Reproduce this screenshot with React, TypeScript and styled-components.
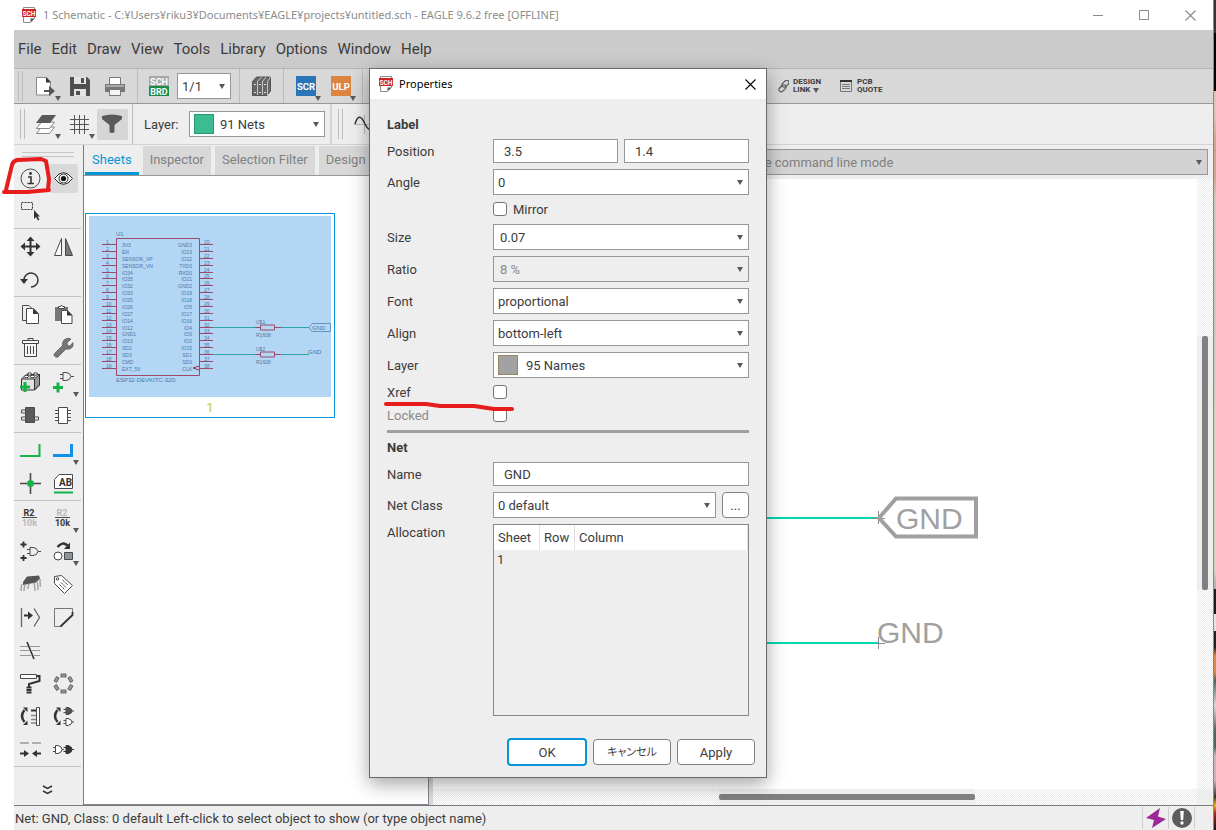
import React from "react";
import styled, { createGlobalStyle, css } from "styled-components";

const ui = `Roboto, "Noto Sans CJK JP", sans-serif`;
const caption = `"Noto Sans", "Noto Sans CJK JP", sans-serif`;

const GlobalStyle = createGlobalStyle`
  *, *::before, *::after { box-sizing: border-box; }
  body { margin: 0; background: #fff; font: 13px/17px ${ui}; color: #3c3c3c; }
  button, input, select { font: inherit; color: inherit; }
`;

/* ---------- window frame ---------- */

const Desktop = styled.div`
  display: flex;
  min-height: 100vh;
  position: relative;
`;

const AppWindow = styled.div`
  flex: 1;
  min-width: 0;
  display: flex;
  flex-direction: column;
  border-right: 1px solid #8a8a8a;
`;

const Wallpaper = styled.div`
  flex: 0 0 2px;
  background: linear-gradient(
    #30343c 0 4%, #000 4% 11%, #dcc5b2 11% 14%, #d0a488 17% 21%, #cfc8be 24% 40%,
    #d8d0c2 50% 69%, #b9b4ac 70% 71%, #1f1b20 71% 74%, #e8e2dc 74% 76%, #241f22 76% 78%,
    #d9874a 79% 81%, #46695a 82%, #dadada 85%, #8a8a8a 87%, #46695a 88% 90%,
    #c8b7b2 91% 94%, #3b3230 96%, #e3bd18 97%, #a3261a 98%, #1a1412 100%
  );
`;

const TitleBar = styled.header`
  display: flex;
  align-items: center;
  height: 30px;
  padding-left: 22px;
  font: 11px/16px ${caption};
  color: #8c8c8c;
`;

const TitleText = styled.span`
  flex: 1;
  margin-left: 7px;
`;

const CaptionButton = styled.button`
  width: 46px;
  height: 30px;
  padding: 0;
  border: 0;
  background: none;
  display: grid;
  place-items: center;
  color: ${(p: { $dark?: boolean }) => (p.$dark ? "#000" : "#8a8a8a")};
`;

const Client = styled.div`
  flex: 1;
  display: flex;
  flex-direction: column;
  margin-left: 14px;
`;

const MenuBar = styled.nav`
  display: flex;
  gap: 10px;
  height: 39px;
  padding-left: 4px;
  align-items: center;
  background: #cbcbcb;
  border-bottom: 1px solid #b4b4b4;
  font-size: 15px;
`;

const MenuItem = styled.button`
  padding: 0;
  border: 0;
  background: none;
`;

const ToolBar = styled.div<{ $light?: boolean }>`
  display: flex;
  align-items: center;
  height: ${(p) => (p.$light ? 41 : 35)}px;
  background: ${(p) => (p.$light ? "#eee" : "#d8d8d8")};
  border-bottom: 1px solid ${(p) => (p.$light ? "#d3d3d3" : "#979797")};
`;

const Grip = styled.span<{ $wide?: boolean }>`
  width: 5px;
  height: 30px;
  margin: ${(p) => (p.$wide ? "0 4px 0 6px" : "0 5px 0 4px")};
  border: solid #bdbdbd;
  border-width: 0 1px;
`;

const Divider = styled.span<{ $strong?: boolean }>`
  align-self: stretch;
  width: ${(p) => (p.$strong ? 2 : 1)}px;
  margin: 0 4px;
  background: #bcbcbc;
  ${(p) => p.$strong && css`background: #d5d5d5; margin: 0 0 0 5px;`}
`;

const dropMark = css`
  &::after {
    content: "";
    position: absolute;
    right: 2px;
    bottom: 1px;
    border: solid transparent;
    border-width: 5px 3px 0;
    border-top-color: #595959;
  }
`;

const ToolButton = styled.button<{ $w?: number; $on?: boolean; $drop?: boolean }>`
  position: relative;
  display: grid;
  place-items: center;
  width: ${(p) => p.$w ?? 35}px;
  height: 31px;
  padding: 0;
  border: 0;
  border-radius: 2px;
  background: ${(p) => (p.$on ? "#d6d6d6" : "none")};
  ${(p) => p.$drop && dropMark}
`;

const SheetPicker = styled.div`
  display: flex;
  margin-right: 4px;
`;

const LayerLabel = styled.label`
  width: 52px;
  padding-left: 7px;
`;

const LinkTools = styled.div`
  display: flex;
  gap: 18px;
  margin-left: 411px;
`;

const LinkTool = styled.button<{ $drop?: boolean }>`
  position: relative;
  display: flex;
  align-items: center;
  gap: 4px;
  padding: 0;
  border: 0;
  background: none;
  text-align: left;
  font: bold 8px/8px ${ui};
  ${(p) => p.$drop && dropMark}
`;

/* ---------- form fields ---------- */

const SelectBox = styled.span<{ $w?: number }>`
  position: relative;
  display: flex;
  align-items: center;
  height: 26px;
  ${(p) => (p.$w ? css`flex: 0 0 ${p.$w}px;` : css`flex: 1;`)}
  &::after {
    content: "";
    position: absolute;
    right: 6px;
    top: 11px;
    border: solid transparent;
    border-width: 5px 3px 0;
    border-top-color: #595959;
  }
`;

const Select = styled.select<{ $pad?: number }>`
  appearance: none;
  width: 100%;
  height: 26px;
  padding: 0 16px 0 ${(p) => p.$pad ?? 4}px;
  border: 1px solid #979797;
  border-radius: 0;
  background: #fff;
  &:disabled {
    background: #eee;
    color: #8a8a8a;
    opacity: 1;
  }
`;

const Swatch = styled.i<{ $net?: boolean }>`
  position: absolute;
  left: 5px;
  top: 3px;
  width: 20px;
  height: 20px;
  background: ${(p) => (p.$net ? "#3dbb92" : "#a2a2a2")};
  border: 1px solid ${(p) => (p.$net ? "#259a72" : "#998464")};
`;

const TextBox = styled.input`
  flex: 1;
  width: 0;
  height: 24px;
  padding: 0 10px;
  border: 1px solid #979797;
  background: #fff;
`;

const CheckBox = styled.input`
  appearance: none;
  width: 14px;
  height: 14px;
  margin: 1px 0 2px;
  border: 1px solid #757575;
  border-radius: 3px;
  background: #fff;
`;

/* ---------- work area ---------- */

const WorkArea = styled.main`
  flex: 1;
  display: flex;
  background: #eee;
`;

const SideBar = styled.aside`
  width: 70px;
  flex: none;
  border-right: 1px solid #7b7b7b;
  padding-right: 2px;
  padding-top: 7px;
`;

const SideGrip = styled.div`
  height: 5px;
  margin: 0 7px 5px 8px;
  border: solid #c6c6c6;
  border-width: 1px 0;
`;

const ToolGroup = styled.div`
  display: grid;
  grid-template-columns: 33px 33px;
  grid-auto-rows: 33px;
  & + & {
    border-top: 1px solid #c2c2c2;
    padding-top: 1px;
  }
`;

const SideTool = styled.button<{ $on?: boolean; $drop?: boolean }>`
  position: relative;
  display: grid;
  place-items: center;
  margin: 2px;
  padding: 0;
  border: 0;
  border-radius: 2px;
  background: ${(p) => (p.$on ? "#d9d9d9" : "none")};
  ${(p) =>
    p.$drop &&
    css`
      ${dropMark}
      &::after {
        right: -1px;
        bottom: 0;
      }
    `}
`;

const MoreTools = styled.button`
  display: grid;
  place-items: center;
  width: 67px;
  height: 39px;
  padding: 8px 0 0;
  border: 0;
  border-top: 1px solid #c2c2c2;
  background: none;
`;

const SheetPane = styled.section`
  width: 345px;
  flex: none;
  display: flex;
  flex-direction: column;
  border-right: 1px solid #7f8690;
  border-bottom: 1px solid #7f8690;
`;

const Tabs = styled.div`
  display: flex;
  gap: 4px;
  height: 31px;
  padding-top: 1px;
  padding-left: 1px;
  overflow: hidden;
  border-bottom: 1px solid #979797;
`;

const Tab = styled.button<{ $on?: boolean }>`
  flex: none;
  padding: 0 7px 2px;
  border: 0;
  background: ${(p) => (p.$on ? "#eee" : "#d8d8d8")};
  color: ${(p) => (p.$on ? "#0696d7" : "#808080")};
  box-shadow: ${(p) => (p.$on ? "inset 0 -3px #0696d7" : "none")};
`;

const SheetList = styled.div`
  flex: 1;
  padding: 37px 1px;
  background: #fff;
`;

const SheetCard = styled.figure`
  width: 250px;
  height: 205px;
  margin: 0;
  padding: 2px 3px;
  border: 1px solid #0696d7;
`;

const Preview = styled.svg`
  display: block;
`;

const SheetCaption = styled.figcaption`
  margin-top: 2px;
  text-align: center;
  color: #c9cc1c;
`;

const Splitter = styled.div`
  width: 4px;
  background: #d9d9d9;
`;

const Editor = styled.section`
  flex: 1;
  min-width: 0;
  display: grid;
  grid-template: 34px 1fr 16px / 1fr 16px;
`;

const CommandBar = styled.div`
  grid-column: 1 / 3;
  display: flex;
  align-items: center;
  padding: 0 5px 0 130px;
`;

const CommandSelect = styled(Select)`
  background: #d3d3d3;
  color: #808080;
`;

const Canvas = styled.svg`
  width: 100%;
  height: 100%;
  background: #fff;
`;

const hatch = "repeating-conic-gradient(#ebebeb 0 25%, #fff 0 50%) 0 0 / 2px 2px";

const ScrollTrack = styled.div<{ $across?: boolean }>`
  display: grid;
  background: ${hatch};
  ${(p) =>
    p.$across
      ? css`grid-template-columns: 286fr 256fr 222fr;`
      : css`grid-template-rows: 157fr 254fr 199fr;`}
`;

const ScrollThumb = styled.div<{ $across?: boolean }>`
  ${(p) => (p.$across ? css`grid-column: 2; padding: 5px 0;` : css`grid-row: 2; padding: 0 5px;`)}
  background: #eee;
  display: grid;
  &::before {
    content: "";
    border-radius: 2px;
    background: #808080;
  }
`;

const StatusBar = styled.footer`
  display: flex;
  align-items: center;
  height: 25px;
  padding-left: 1px;
  padding-right: 18px;
  background: #eee;
  border-top: 1px solid #7b7b7b;
`;

const StatusText = styled.span`
  flex: 1;
`;

const StatusCell = styled.span`
  display: grid;
  place-items: center;
  width: 26px;
  height: 22px;
  border-left: 1px solid #cfcfcf;
  &:last-child {
    width: 27px;
    border-right: 1px solid #cfcfcf;
  }
`;

/* ---------- dialog ---------- */

const Dialog = styled.form`
  position: absolute;
  left: 369px;
  top: 68px;
  width: 398px;
  border: 1px solid #696969;
  background: #eee;
  box-shadow: 0 6px 18px rgba(0, 0, 0, 0.36);
`;

const DialogTitle = styled.header`
  display: flex;
  align-items: center;
  height: 30px;
  padding-left: 9px;
  background: #fff;
  color: #000;
  font: 11px/16px ${caption};
`;

const DialogTitleText = styled(TitleText)`
  margin-left: 6px;
`;

const CloseButton = styled(CaptionButton)`
  width: 32px;
`;

const Fields = styled.div`
  display: grid;
  grid-template-columns: 106px 1fr;
  row-gap: 6px;
  align-items: center;
  padding: 17px 17px 0;
`;

const GroupTitle = styled.h2`
  grid-column: 1 / 3;
  margin: 0;
  font: bold 13px/17px ${ui};
`;

const FieldLabel = styled.label<{ $off?: boolean; $top?: boolean }>`
  color: ${(p) => (p.$off ? "#8a8a8a" : "inherit")};
  align-self: ${(p) => (p.$top ? "start" : "center")};
`;

const FieldRow = styled.div`
  grid-column: 2;
  display: flex;
  align-items: center;
  gap: 6px;
  min-height: 17px;
`;

const Rule = styled.hr`
  grid-column: 1 / 3;
  width: 100%;
  height: 3px;
  margin: 0;
  border: 0;
  background: #a0a0a0;
`;

const DialogButton = styled.button<{ $primary?: boolean; $small?: boolean }>`
  width: ${(p) => (p.$small ? 27 : p.$primary ? 80 : 78)}px;
  height: ${(p) => (p.$primary ? 28 : 26)}px;
  padding: 0;
  border: ${(p) => (p.$primary ? "2px solid #0696d7" : "1px solid #808080")};
  border-radius: 4px;
  background: #fff;
`;

const KanaLabel = styled.span`
  font-size: 11px;
  font-feature-settings: "palt";
`;

const AllocationBox = styled.div`
  height: 192px;
  border: 1px solid #828790;
`;

const AllocationTable = styled.table`
  width: 100%;
  border-collapse: separate;
  border-spacing: 0;
  table-layout: fixed;
  text-align: left;
  th {
    height: 25px;
    padding: 0 4px;
    background: #fff;
    font-weight: normal;
    border-right: 1px solid #e2e2e2;
  }
  td {
    height: 19px;
    padding: 0 3px;
  }
`;

const SheetCol = styled.col`
  width: 46px;
`;
const RowCol = styled.col`
  width: 35px;
`;

const Actions = styled.div`
  display: flex;
  justify-content: flex-end;
  align-items: center;
  gap: 6px;
  padding: 22px 11px 11px;
`;

const Markup = styled.svg`
  position: absolute;
  left: 0;
  top: 0;
  width: 520px;
  height: 420px;
  pointer-events: none;
`;

/* ---------- icons ---------- */

const Icon = ({ children, w = 21, h = 21 }: { children: React.ReactNode; w?: number; h?: number }) => (
  <svg width={w} height={h} viewBox={`0 0 ${w} ${h}`} fill="none" stroke="#4a4a4a" aria-hidden="true">
    {children}
  </svg>
);

const SchIcon = () => (
  <Icon w={14} h={16}>
    <path d="M1.5 .5h11v11l-4 4h-7z" fill="#fff" stroke="#8c8c8c" />
    <path d="M8.500 15v-3.500h4z" fill="#555" stroke="none" />
    <path d="M0 2h14v8H0z" fill="#cf2323" stroke="none" />
    <text x="7" y="8.500" fontSize="6.500" fontFamily="Roboto" fontWeight="700" fill="#fff" stroke="none" textAnchor="middle">SCH</text>
  </Icon>
);

const G = "#17b34a";
const D = "#333";
const gate = (x: number, y: number, fill = "none") => (
  <path d={`M${x} ${y}h3q4 0 5 4q-1 4-5 4h-3zM${x - 3} ${y + 2}h3M${x - 3} ${y + 6}h3M${x + 8} ${y + 4}h3`} fill={fill} />
);

const icons: Record<string, React.ReactNode> = {
  info: <><circle cx="10.500" cy="10.500" r="9.500" /><path d="M8 9h3v6M7.500 15.500h6.500" stroke={D} strokeWidth="1.600" /><circle cx="10.500" cy="5.500" r="1.400" fill={D} stroke="none" /></>,
  eye: <><path d="M1.500 10.500Q6 4.500 10.500 4.500T19.500 10.500Q15 16.500 10.500 16.500T1.500 10.500z" stroke={D} fill="#f2f2f2" /><circle cx="10.500" cy="10.500" r="4.500" stroke={D} /><circle cx="10.500" cy="10.500" r="2.600" fill="#111" stroke="none" /></>,
  group: <><path d="M1.500 1.500h11v7h-11z" strokeDasharray="2 1" stroke={D} /><path d="M14 9v9l2-2 2 3.500 1.500-1-2-3h2.500z" fill={D} stroke="none" /></>,
  move: <path d="M9.500 5h2v4.500H16v-3l4.500 4-4.500 4v-3h-4.500V16h3l-4 4.500-4-4.500h3v-4.500H5v3l-4.500-4 4.500-4v3h4.500V5h-3l4-4.500 4 4.500z" fill={D} stroke="none" />,
  mirror: <><path d="M8.500 2.500v17h-7z" fill="#fff" /><path d="M12.500 2.500v17h7z" fill="#777" /></>,
  rotate: <><path d="M4 10.500a7 7 0 1 1 7 7.500" stroke={D} strokeWidth="1.500" /><path d="M0 10h8l-4 5z" fill={D} stroke="none" /></>,
  copy: <><path d="M6 16.500H2.500v-15H9l4 4" /><path d="M6.500 4.500h7l5 5v10h-12z" fill="#fff" /><path d="M13 4.500l5.500 5.500H13z" fill={D} stroke="none" /></>,
  paste: <><path d="M2 3h13v14H2z" fill="#777" stroke="none" /><path d="M5.500 4.500v-2h2l1-1.500 1 1.500h2v2z" fill="#fff" /><path d="M8.500 6.500h6l4.500 4.500v8.500H8.500z" fill="#fff" /><path d="M14 6.500l5 5h-5z" fill={D} stroke="none" /></>,
  trash: <><path d="M8 3.500v-2h5v2M2.500 3.500h16v3h-16zM4.500 6.500v13h12v-13" stroke="#444" fill="#f6f6f6" /><path d="M7.500 9v8M10.500 9v8M13.500 9v8" stroke="#444" /></>,
  wrench: <path d="M18 2l-4 4 .5 2.500 2.500.5 3-3.500q1 5-3.500 6.500-2 .5-3.500 0L5 20q-2.500 1-4-1.500-.5-1.500 1-2.500l7.500-7.500Q9 3 13.500 1.500 16 .8 18 2z" fill="#777" stroke={D} strokeWidth=".5" />,
  addPart: <><path d="M1.500 7l5-4.500h13V13l-5 5h-13z" fill="#e2e2e2" stroke={D} /><path d="M14.500 7l5-4.500V13l-5 5z" fill="#999" stroke={D} /><path d="M1.500 7h13" stroke={D} /><ellipse cx="6.500" cy="4.500" rx="2.200" ry="1.200" fill="#fff" stroke={D} /><ellipse cx="12.500" cy="4.500" rx="2.200" ry="1.200" fill="#fff" stroke={D} /><ellipse cx="9.500" cy="2" rx="2" ry="1.200" fill="#fff" stroke={D} /><ellipse cx="15.500" cy="2" rx="2" ry="1.200" fill="#fff" stroke={D} /><path d="M5 10v10M0 15h10" stroke={G} strokeWidth="3" /></>,
  addGate: <>{gate(10, .5)}<path d="M5 10.500v10M0 15.500h10" stroke={G} strokeWidth="3" /></>,
  chip: <><path d="M1.500 5h4v3h-4zM1.500 12h4v3h-4zM14.500 12h4v3h-4z" /><path d="M5.500 2.500h9v15h-9z" fill="#5a5a5a" /></>,
  chipOut: <path d="M5.500 2.500h9v16h-9zM2 5.500h3.500v3H2M2 12.500h3.500v3H2M18 5.500h-3.500v3H18M18 12.500h-3.500v3H18" fill="#fff" />,
  net: <path d="M0 16h19.500V4" stroke={G} strokeWidth="2" />,
  bus: <path d="M0 15.500h18.500V4" stroke="#1191ee" strokeWidth="3" />,
  junction: <><path d="M10.500 0v21M0 10.500h21" strokeWidth="1.600" /><circle cx="10.500" cy="10.500" r="3.500" fill={G} stroke="none" /></>,
  label: <><path d="M1.500 6.500l4.500-5h13.500v14H1.500z" fill="#fff" /><path d="M1 19.500h19" stroke={G} strokeWidth="2" /><text x="12.500" y="12.500" fontSize="10" fontFamily="Roboto" fontWeight="700" fill={D} stroke="none" textAnchor="middle">AB</text></>,
  name: <><text x="9" y="8" fontSize="9" fontFamily="Roboto" fontWeight="700" fill={D} stroke="none" textAnchor="middle">R2</text><path d="M2 9.500h15" /><text x="9.500" y="18" fontSize="9" fontFamily="Roboto" fontWeight="700" fill="#b8b8b8" stroke="none" textAnchor="middle">10k</text></>,
  value: <><text x="9" y="8" fontSize="9" fontFamily="Roboto" fontWeight="700" fill="#b8b8b8" stroke="none" textAnchor="middle">R2</text><path d="M2 9.500h15" /><text x="9.500" y="18" fontSize="9" fontFamily="Roboto" fontWeight="700" fill={D} stroke="none" textAnchor="middle">10k</text></>,
  invoke: <>{gate(10, 6.500)}<path d="M3.500 .5v6M.5 3.500h6M3.500 14v6M.5 17h6" stroke={D} strokeWidth="1.800" /></>,
  replace: <><circle cx="5" cy="15" r="4" fill="#fff" /><path d="M11.500 11.500h8v7h-8z" fill="#8d949a" /><path d="M4.500 6q5-6 10-1.500" stroke={D} strokeWidth="2.500" /><path d="M17 1.500v6.500h-6z" fill={D} stroke="none" /></>,
  gateswap: <><path d="M7 2.500l12-1 1 3-4 4L3 11V8z" fill="#555" stroke="none" /><path d="M2 10q-1 3-1 7M5 11q-1 3-1 6M9 10q-1 3-1 5M14 9q1 4 1 8M17 7q1 4 1 9M20 5q0 4 .5 8" stroke="#a5a5a5" strokeWidth="1.500" /></>,
  tag: <><path d="M1.500 2.500l7-1 11 10-8 8-10-10z" fill="#fff" /><circle cx="4.500" cy="5" r="1.200" /><path d="M9.500 6l6 5.500M8 8.500l5.500 5.500M6.500 10.500l5 5" strokeDasharray="3 1" /></>,
  split: <><path d="M1.500 1v19M14 1.500l5.500 9-5.500 9" strokeWidth="1.300" stroke="#666" /><path d="M4 7.500h4v-3l5 4-5 4v-3H4z" fill={D} stroke="none" /></>,
  miter: <><path d="M8 19.500H1.500v-18h18v4" stroke="#777" /><path d="M19.500 5v3l-12 11.500" stroke={D} strokeWidth="1.800" /></>,
  ripup: <><path d="M0 6.500h8M0 10.500h9M0 15.500h11M10 6.500h10M12 10.500h8M14 15.500h6" stroke="#999" /><path d="M7 2l7 17" stroke={D} strokeWidth="1.600" /></>,
  paint: <><path d="M.5 1.500h16v4H.5z" fill="#fff" /><path d="M17 3h2.500v5L9 11v3" stroke={D} strokeWidth="2" /><path d="M9 13.500v7" stroke={D} strokeWidth="5" strokeDasharray="2 .5" /></>,
  ring: <g fill="#999" stroke="#555" strokeWidth=".8">{[0, 60, 120, 180, 240, 300].map((a) => <rect key={a} x="8" y="1" width="5" height="3" transform={`rotate(${a} 10.500 10.500)`} />)}</g>,
  pinswap: <><path d="M4.500 4q-5 6 0 12" stroke={D} strokeWidth="2.500" /><path d="M3 1.500h4.500V6zM3 19h4.500v-4.500z" fill={D} stroke="none" /><path d="M11 4.500h6" stroke={D} strokeWidth="2" /><path d="M11 9.500h6M11 13.500h6M11 17h6" stroke="#888" strokeWidth="1.400" /><path d="M16.500 1.500h3v18h-3z" fill="#fff" /></>,
  gateSwap2: <><path d="M4.500 4q-5 6 0 12" stroke={D} strokeWidth="2.500" /><path d="M3 1.500h4.500V6zM3 19h4.500v-4.500z" fill={D} stroke="none" /><path d="M13 1.500h2q4 1 4 3.500t-4 3.500h-2zM10.500 3.500H13M10.500 6.500H13M19 5h2" fill="#555" /><path d="M13 12.500h2q4 1 4 3.500t-4 3.500h-2zM10.500 14.500H13M10.500 17.500H13M19 16h2" fill="#fff" /></>,
  optimize: <><path d="M0 4h9M12 4h9" stroke="#999" strokeWidth="1.600" /><path d="M0 13.500h4v-2.500l5 3.500-5 3.500v-2.500H0zM21 13.500h-4v-2.500l-5 3.500 5 3.500v-2.500h4z" fill={D} stroke="none" /></>,
  module: <><path d="M2.500 6.500H5q4 1 4 4t-4 4H2.500zM0 8.500h3M0 12.500h3M9 10.500h2" fill="#fff" /><path d="M13 6.500h2q4 1 4 4t-4 4h-2zM10.500 8.500H13M10.500 12.500H13M19 10.500h2" fill={D} stroke={D} /></>,
};

const sideGroups: [string, string?, ("drop" | "on")?][][] = [
  [["info", "Info"], ["eye", "Show", "on"], ["group", "Group"]],
  [["move", "Move"], ["mirror", "Mirror"], ["rotate", "Rotate"]],
  [["copy", "Copy"], ["paste", "Paste"], ["trash", "Delete"], ["wrench", "Change"]],
  [["addPart", "Add part"], ["addGate", "Add gate", "drop"], ["chip", "Package"], ["chipOut", "Package outline"]],
  [["net", "Net"], ["bus", "Bus", "drop"], ["junction", "Junction"], ["label", "Label"]],
  [
    ["name", "Name"], ["value", "Value", "drop"], ["invoke", "Invoke"], ["replace", "Replace", "drop"],
    ["gateswap", "Smash"], ["tag", "Attribute"], ["split", "Split"], ["miter", "Miter"],
    ["ripup", "Slice"], [""], ["paint", "Paint"], ["ring", "Array"],
    ["pinswap", "Pin swap"], ["gateSwap2", "Gate swap"], ["optimize", "Optimize"], ["module", "Module"],
  ],
];

const Badge = ({ text, fill }: { text: string; fill: string }) => (
  <Icon w={20} h={20}>
    <path d="M0 0h20v20H0z" fill={fill} stroke="none" />
    <text x="10" y="14" fontSize="9.500" fontFamily="Roboto" fontWeight="700" fill="#fff" stroke="none" textAnchor="middle">{text}</text>
  </Icon>
);

/* ---------- schematic drawings ---------- */

const leftPins = ["3V3", "EN", "SENSOR_VP", "SENSOR_VN", "IO34", "IO35", "IO32", "IO33", "IO25", "IO26", "IO27", "IO14", "IO12", "GND1", "IO13", "SD2", "SD3", "CMD", "EXT_5V"];
const rightPins = ["GND3", "IO23", "IO22", "TXD0", "RXD0", "IO21", "GND2", "IO19", "IO18", "IO5", "IO17", "IO16", "IO4", "IO0", "IO2", "IO15", "SD1", "SD0", "CLK"];
const pinY = (i: number) => 28.5 + Math.round(i * 6.88);

const SheetPreview = () => (
  <Preview width="242" height="181" viewBox="0 0 242 181" fontFamily="Liberation Sans" fontSize="5" fill="#4f76a3" role="img" aria-label="Sheet 1">
    <path d="M0 0h242v181H0z" fill="#b3d6f4" />
    <path d="M27.500 22.500h83v137h-83z" fill="none" stroke="#9b4a6b" />
    <text x="27" y="20" fontSize="6">U1</text>
    {leftPins.map((p, i) => (
      <g key={p}>
        <path d={`M13 ${pinY(i)}h14M111 ${pinY(i)}h13`} stroke="#9b4a6b" />
        <text x="17" y={pinY(i) - 1}>{i + 1}</text>
        <text x="33" y={pinY(i) + 2}>{p}</text>
        <text x="103" y={pinY(i) + 2} textAnchor="end">{rightPins[i]}</text>
        <text x="115" y={pinY(i) - 1}>{i + 20}</text>
      </g>
    ))}
    <path d="M110 150l-6 2 6 2" fill="none" stroke="#a5324f" />
    <text x="27" y="166" fontSize="6">ESP32-DEVKITC-32D</text>
    {[111.5, 138.500].map((y, i) => (
      <g key={y}>
        <path d={`M124 ${y}h42M192 ${y}h28`} stroke="#2aa7a4" />
        <path d={`M166 ${y}h5.500M186 ${y}h6M171.500 ${y - 2.500}h14v5h-14z`} fill="none" stroke="#9b4a6b" />
        <text x="167" y={y - 4}>{`U$${i + 1}`}</text>
        <text x="167" y={y + 9}>R1608</text>
      </g>
    ))}
    <path d="M220 111.500l3-4h18.500v8H223z" fill="none" stroke="#6c93bb" />
    <text x="223" y="113.500" fontSize="6">GND</text>
    <text x="219" y="138" fontSize="6">GND</text>
  </Preview>
);

const NetCanvas = () => (
  <Canvas role="img" aria-label="Schematic nets">
    <path d="M0 339h445M0 464h445" stroke="#00d9b0" strokeWidth="2" />
    <path d="M445.500 332v13M439 339.500h13M445.500 458v12M445 464.500h7" stroke="#8a8a8a" />
    <path d="M446 339l17-19.500h80v38h-80z" fill="none" stroke="#a0a0a0" strokeWidth="4" />
    <g fontFamily="Liberation Sans" fontSize="30" fill="#a0a0a0">
      <text x="463" y="350">GND</text>
      <text x="444" y="464">GND</text>
    </g>
  </Canvas>
);

/* ---------- application ---------- */

const PropertySelect = ({ id, value, off, pad, children }: { id: string; value: string; off?: boolean; pad?: number; children?: React.ReactNode }) => (
  <SelectBox>
    <Select id={id} disabled={off} $pad={pad}>
      <option>{value}</option>
    </Select>
    {children}
  </SelectBox>
);

const Cross = ({ size }: { size: number }) => (
  <Icon w={size} h={size}>
    <path d={`M.5 .5l${size - 1} ${size - 1}M${size - .5} .5l-${size - 1} ${size - 1}`} stroke="currentColor" strokeWidth="1.100" />
  </Icon>
);

export default function App() {
  return (
    <Desktop>
      <GlobalStyle />
      <AppWindow>
        <TitleBar>
          <SchIcon />
          <TitleText>1 Schematic - C:¥Users¥riku3¥Documents¥EAGLE¥projects¥untitled.sch - EAGLE 9.6.2 free [OFFLINE]</TitleText>
          <CaptionButton type="button" aria-label="Minimize"><Icon w={11} h={11}><path d="M0 5.500h10" stroke="#8a8a8a" /></Icon></CaptionButton>
          <CaptionButton type="button" aria-label="Maximize"><Icon w={11} h={11}><path d="M.5 .5h9v9h-9z" stroke="#8a8a8a" /></Icon></CaptionButton>
          <CaptionButton type="button" aria-label="Close"><Cross size={11} /></CaptionButton>
        </TitleBar>
        <Client>
          <MenuBar>
            {["File", "Edit", "Draw", "View", "Tools", "Library", "Options", "Window", "Help"].map((m) => (
              <MenuItem type="button" key={m}>{m}</MenuItem>
            ))}
          </MenuBar>
          <ToolBar>
            <Grip />
            <ToolButton $drop aria-label="New">
              <Icon><path d="M1.500 1.500h10l4 4.500v13h-14z" fill="#fff" stroke="#888" /><path d="M11 1l5 5.500h-5z" fill={D} stroke="none" /><path d="M9 14h5v-4l6 5-6 5v-4H9z" fill="#555" stroke="none" /></Icon>
            </ToolButton>
            <ToolButton aria-label="Save">
              <Icon><path d="M0 1h17l3 3v16H0z" fill="#4f4f4f" stroke="none" /><path d="M4 1h12v7H4zM4 13h12v7H4z" fill="#e4e4e4" stroke="none" /><path d="M11 2h3v5h-3zM6 15h4v4H6z" fill="#4f4f4f" stroke="none" /></Icon>
            </ToolButton>
            <ToolButton aria-label="Print">
              <Icon><path d="M4.500 8V1.500h11V8" fill="#fff" stroke="#777" /><path d="M0 8h20v8H0z" fill="#777" stroke="none" /><path d="M1 10h18" stroke="#ddd" /><path d="M4.500 13.500h11v6h-11z" fill="#f4f4f4" stroke="#777" /></Icon>
            </ToolButton>
            <Divider />
            <ToolButton aria-label="Switch to board">
              <Icon w={21} h={20}>
                <path d="M0 0h20v10H0z" fill="#a8a8a8" stroke="none" /><path d="M0 10h20v10H0z" fill="#1c8a44" stroke="none" />
                <text x="10" y="8.500" fontSize="9" fontFamily="Roboto" fontWeight="700" fill="#fff" stroke="none" textAnchor="middle">SCH</text>
                <text x="10" y="18.500" fontSize="9" fontFamily="Roboto" fontWeight="700" fill="#fff" stroke="none" textAnchor="middle">BRD</text>
              </Icon>
            </ToolButton>
            <SheetPicker>
              <SelectBox $w={54}><Select aria-label="Sheet"><option>1/1</option></Select></SelectBox>
            </SheetPicker>
            <Divider />
            <ToolButton aria-label="Library manager">
              <Icon w={19} h={20}>
                <path d="M.5 5.500l4-4.500h14v14l-3.500 4.500H.5z" fill="#666" stroke="#555" />
                <path d="M5.500 5v14M10.500 5v14M5.500 5.500l4-4.500M10.500 5.500L14 1M15.500 19V5.500L18.500 1" stroke="#ddd" strokeWidth=".8" />
                <path d="M2 8.500h2M7 8.500h2M12 8.500h2M2 16.500h2M7 16.500h2M12 16.500h2" stroke="#ddd" />
              </Icon>
            </ToolButton>
            <Divider />
            <ToolButton $drop aria-label="Run script"><Badge text="SCR" fill="#2b74b8" /></ToolButton>
            <ToolButton $drop aria-label="Run ULP"><Badge text="ULP" fill="#dc8440" /></ToolButton>
            <Divider />
            <LinkTools>
              <LinkTool type="button" $drop>
                <Icon w={11} h={13}><g stroke="#555" strokeWidth="1.200"><rect x="4.500" y="-1" width="4.500" height="8" rx="2.200" transform="rotate(45 6.700 3) translate(1 0)" /><rect x="1.500" y="5" width="4.500" height="8" rx="2.200" transform="rotate(45 3.700 9) translate(0 -1)" /></g></Icon>
                <span>DESIGN<br />LINK</span>
              </LinkTool>
              <LinkTool type="button">
                <Icon w={14} h={14}><path d="M1.500 1.500h11v11h-11z" stroke="#777" /><path d="M1 2h12" stroke={D} strokeWidth="2" /><path d="M3 5.500h8M3 7.500h8M3 9.500h8" stroke="#777" /></Icon>
                <span>PCB<br />QUOTE</span>
              </LinkTool>
            </LinkTools>
          </ToolBar>
          <ToolBar $light>
            <Grip $wide />
            <ToolButton $w={34} $drop aria-label="Layer settings">
              <Icon><path d="M5.500 13h13l-5 6.500H.5z" fill="#fff" stroke="#888" /><path d="M5.500 8h13l-5 6.500H.5z" fill="#fff" stroke="#888" /><path d="M6 1h14l-6 8H0z" fill="#5a5a5a" stroke="none" /></Icon>
            </ToolButton>
            <ToolButton $w={34} $drop aria-label="Grid">
              <Icon><path d="M4.500 1v19M9.500 1v19M14.500 1v19M0 5.500h19M0 10.500h19M0 15.500h19" stroke="#555" /></Icon>
            </ToolButton>
            <ToolButton $w={31} $on aria-label="Selection filter">
              <Icon><path d="M0 2q10-3 20 0v3l-7.500 6v7q-2.500 2-5 0v-7L0 5z" fill="#5a5a5a" stroke="none" /></Icon>
            </ToolButton>
            <Divider />
            <LayerLabel htmlFor="active-layer">Layer:</LayerLabel>
            <SelectBox $w={136}>
              <Select id="active-layer" $pad={30}><option>91 Nets</option></Select>
              <Swatch $net />
            </SelectBox>
            <Divider $strong />
            <Grip $wide />
            <ToolButton aria-label="Simulate">
              <Icon><path d="M0 10.500h21M10.500 1v19" stroke="#bbb" /><path d="M1 10Q5-3 10.500 9T20 11" stroke={D} strokeWidth="1.500" /></Icon>
            </ToolButton>
          </ToolBar>
          <WorkArea>
            <SideBar>
              <SideGrip />
              {sideGroups.map((g, i) => (
                <ToolGroup key={i}>
                  {g.map(([id, name, mode], n) =>
                    id ? (
                      <SideTool type="button" key={id} aria-label={name} $on={mode === "on"} $drop={mode === "drop"}>
                        <Icon>{icons[id]}</Icon>
                      </SideTool>
                    ) : (
                      <span key={n} />
                    )
                  )}
                </ToolGroup>
              ))}
              <MoreTools type="button" aria-label="More tools">
                <Icon w={11} h={10}><path d="M1 1l4.500 2.500L10 1M1 6l4.500 2.500L10 6" stroke={D} strokeWidth="1.500" /></Icon>
              </MoreTools>
            </SideBar>
            <SheetPane>
              <Tabs>
                <Tab type="button" $on>Sheets</Tab>
                <Tab type="button">Inspector</Tab>
                <Tab type="button">Selection Filter</Tab>
                <Tab type="button">Design Manager</Tab>
              </Tabs>
              <SheetList>
                <SheetCard>
                  <SheetPreview />
                  <SheetCaption>1</SheetCaption>
                </SheetCard>
              </SheetList>
            </SheetPane>
            <Splitter />
            <Editor>
              <CommandBar>
                <SelectBox>
                  <CommandSelect aria-label="Command line" $pad={5}>
                    <option>Click or press Ctrl+L key to activate command line mode</option>
                  </CommandSelect>
                </SelectBox>
              </CommandBar>
              <NetCanvas />
              <ScrollTrack><ScrollThumb /></ScrollTrack>
              <ScrollTrack $across><ScrollThumb $across /></ScrollTrack>
            </Editor>
          </WorkArea>
          <StatusBar>
            <StatusText>Net: GND, Class: 0 default Left-click to select object to show (or type object name)</StatusText>
            <StatusCell>
              <Icon w={20} h={20}><path d="M14 0L0 10l8 2-2 8 14-9-8-2.500z" fill="#9c2a96" stroke="none" /></Icon>
            </StatusCell>
            <StatusCell>
              <Icon w={20} h={20}><circle cx="10" cy="10" r="10" fill="#5c5c5c" stroke="none" /><path d="M8.200 3h3.600l-.6 9H8.800z" fill="#fff" stroke="none" /><circle cx="10" cy="15" r="1.700" fill="#fff" stroke="none" /></Icon>
            </StatusCell>
          </StatusBar>
        </Client>
      </AppWindow>
      <Wallpaper />

      <Dialog role="dialog" aria-label="Properties" onSubmit={(e) => e.preventDefault()}>
        <DialogTitle>
          <SchIcon />
          <DialogTitleText>Properties</DialogTitleText>
          <CloseButton type="button" $dark aria-label="Close"><Cross size={11} /></CloseButton>
        </DialogTitle>
        <Fields>
          <GroupTitle>Label</GroupTitle>
          <FieldLabel htmlFor="pos-x">Position</FieldLabel>
          <FieldRow>
            <TextBox id="pos-x" defaultValue="3.5" />
            <TextBox aria-label="Position Y" defaultValue="1.4" />
          </FieldRow>
          <FieldLabel htmlFor="angle">Angle</FieldLabel>
          <PropertySelect id="angle" value="0" />
          <FieldRow>
            <CheckBox type="checkbox" id="mirror" />
            <label htmlFor="mirror">Mirror</label>
          </FieldRow>
          <FieldLabel htmlFor="size">Size</FieldLabel>
          <PropertySelect id="size" value="0.07" pad={6} />
          <FieldLabel htmlFor="ratio">Ratio</FieldLabel>
          <PropertySelect id="ratio" value="8 %" pad={6} off />
          <FieldLabel htmlFor="font">Font</FieldLabel>
          <PropertySelect id="font" value="proportional" />
          <FieldLabel htmlFor="align">Align</FieldLabel>
          <PropertySelect id="align" value="bottom-left" />
          <FieldLabel htmlFor="layer">Layer</FieldLabel>
          <PropertySelect id="layer" value="95 Names" pad={32}><Swatch /></PropertySelect>
          <FieldLabel htmlFor="xref">Xref</FieldLabel>
          <FieldRow><CheckBox type="checkbox" id="xref" /></FieldRow>
          <FieldLabel htmlFor="locked" $off>Locked</FieldLabel>
          <FieldRow><CheckBox type="checkbox" id="locked" disabled /></FieldRow>
          <Rule />
          <GroupTitle>Net</GroupTitle>
          <FieldLabel htmlFor="net-name">Name</FieldLabel>
          <FieldRow><TextBox id="net-name" defaultValue="GND" /></FieldRow>
          <FieldLabel htmlFor="net-class">Net Class</FieldLabel>
          <FieldRow>
            <PropertySelect id="net-class" value="0 default" />
            <DialogButton type="button" $small>...</DialogButton>
          </FieldRow>
          <FieldLabel as="span" $top>Allocation</FieldLabel>
          <AllocationBox>
            <AllocationTable>
              <colgroup><SheetCol /><RowCol /><col /></colgroup>
              <thead><tr><th>Sheet</th><th>Row</th><th>Column</th></tr></thead>
              <tbody><tr><td>1</td><td /><td /></tr></tbody>
            </AllocationTable>
          </AllocationBox>
        </Fields>
        <Actions>
          <DialogButton type="submit" $primary>OK</DialogButton>
          <DialogButton type="button"><KanaLabel>キャンセル</KanaLabel></DialogButton>
          <DialogButton type="button">Apply</DialogButton>
        </Actions>
      </Dialog>

      <Markup fill="none" stroke="#e81c1c" strokeWidth="4" strokeLinecap="round" strokeLinejoin="round" aria-hidden="true">
        <path d="M4 192l23 0 22-2M48 189l1-10-3-18-5-2-24 1q-4 1-5 5l-6 25" />
        <path d="M386 404h40l14 2h34l20 3h18" />
      </Markup>
    </Desktop>
  );
}
